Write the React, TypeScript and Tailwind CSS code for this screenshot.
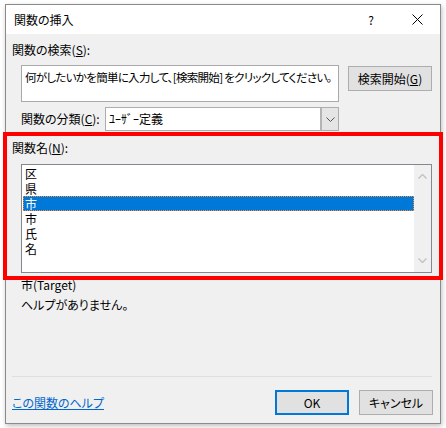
export default function App() {
  const items = [
    { t: "区", sel: false },
    { t: "県", sel: false },
    { t: "巿", sel: true },
    { t: "市", sel: false },
    { t: "氏", sel: false },
    { t: "名", sel: false },
  ];
  return (
    <div className="relative w-[446px] h-[428px] bg-white pt-[4px] pl-[5px] font-['Noto_Sans_CJK_JP',sans-serif] text-[12px] leading-[16px] text-black [font-feature-settings:'palt']">
      <div className="w-[436px] h-[420px] border border-[#8a8a8a] bg-[#f0f0f0] flex flex-col shadow-[1px_2px_5px_rgba(0,0,0,0.25)]">
        {/* title bar */}
        <div className="h-[29px] shrink-0 bg-white flex items-center pl-[8px]">
          <span>関数の挿入</span>
          <div className="ml-auto flex h-full">
            <div className="w-[46px] h-full flex items-center justify-center text-[12px]">?</div>
            <div className="w-[46px] h-full flex items-center justify-center">
              <svg width="11" height="11" viewBox="0 0 11 11">
                <path d="M0.5 0.5 L10.5 10.5 M10.5 0.5 L0.5 10.5" stroke="#000" strokeWidth="1" fill="none" />
              </svg>
            </div>
          </div>
        </div>
        {/* body */}
        <div className="flex flex-col pl-[6px] pr-[7px]">
          <div className="mt-[8px] h-[16px]">
            関数の検索(<span className="underline">S</span>):
          </div>
          <div className="mt-[7px] flex pl-[9px]">
            <div className="w-[318px] h-[37px] border border-[#a9a9a9] bg-white pl-[3px] pt-[3px] whitespace-nowrap overflow-hidden text-[11.5px] tracking-[-0.7px]">
              何がしたいかを簡単に入力して、[検索開始] をクリックしてください。
            </div>
            <div className="ml-[9px] mt-[1px] w-[84px] h-[25px] border border-[#adadad] bg-[#e1e1e1] flex items-center justify-center">
              検索開始(<span className="underline">G</span>)
            </div>
          </div>
          <div className="mt-[5px] flex items-center h-[24px] pl-[9px]">
            <div className="w-[84px]">
              関数の分類(<span className="underline">C</span>):
            </div>
            <div className="w-[234px] h-[24px] border border-[#adadad] bg-white flex">
              <div className="flex-1 pl-[3px] flex items-center">ﾕｰｻﾞｰ定義</div>
              <div className="w-[18px] h-full bg-[#e5e5e5] border-l-2 border-[#b4b4b4] flex items-center justify-center">
                <svg width="9" height="5" viewBox="0 0 9 5">
                  <path d="M0.5 0.5 L4.5 4.5 L8.5 0.5" stroke="#555" strokeWidth="1" fill="none" />
                </svg>
              </div>
            </div>
          </div>
          <div className="mt-[9px] h-[16px]">
            関数名(<span className="underline">N</span>):
          </div>
          <div className="mt-[8px] ml-[9px] w-[411px] h-[109px] border border-[#828790] bg-white flex">
            <div className="flex-1 pl-[1px] pt-[1px] flex flex-col">
              {items.map((it, i) => (
                <div
                  key={i}
                  className={
                    it.sel
                      ? "h-[15px] leading-[15px] pl-[2px] bg-[#0078d7] text-white outline-1 outline-dotted outline-[#ff8c28] -outline-offset-1"
                      : "h-[15px] leading-[15px] pl-[2px]"
                  }
                >
                  {it.t}
                </div>
              ))}
            </div>
            <div className="w-[17px] h-full bg-[#f0f0f0] flex flex-col items-center justify-between py-[9px]">
              <svg width="9" height="5" viewBox="0 0 9 5">
                <path d="M0.5 4.5 L4.5 0.5 L8.5 4.5" stroke="#c2c2c2" strokeWidth="1.4" fill="none" />
              </svg>
              <svg width="9" height="5" viewBox="0 0 9 5">
                <path d="M0.5 0.5 L4.5 4.5 L8.5 0.5" stroke="#c2c2c2" strokeWidth="1.4" fill="none" />
              </svg>
            </div>
          </div>
          <div className="mt-[4px] pl-[9px] h-[16px]">巿(Target)</div>
          <div className="mt-[4px] pl-[9px] h-[16px]">ヘルプがありません。</div>
          <div className="mt-[63px] h-px w-[420px] bg-[#dfdfdf]" />
          <div className="mt-[13px] h-[25px] flex items-center">
            <span className="text-[#0066cc] underline">この関数のヘルプ</span>
            <div className="ml-auto flex gap-[10px]">
              <div className="w-[74px] h-[25px] border-2 border-[#0078d7] bg-[#e1e1e1] flex items-center justify-center">
                OK
              </div>
              <div className="w-[74px] h-[25px] border border-[#adadad] bg-[#e1e1e1] flex items-center justify-center">
                キャンセル
              </div>
            </div>
          </div>
        </div>
      </div>
      {/* red annotation */}
      <div className="absolute left-[3px] top-[132px] w-[440px] h-[148px] border-4 border-[#ff0000] pointer-events-none" />
    </div>
  );
}
